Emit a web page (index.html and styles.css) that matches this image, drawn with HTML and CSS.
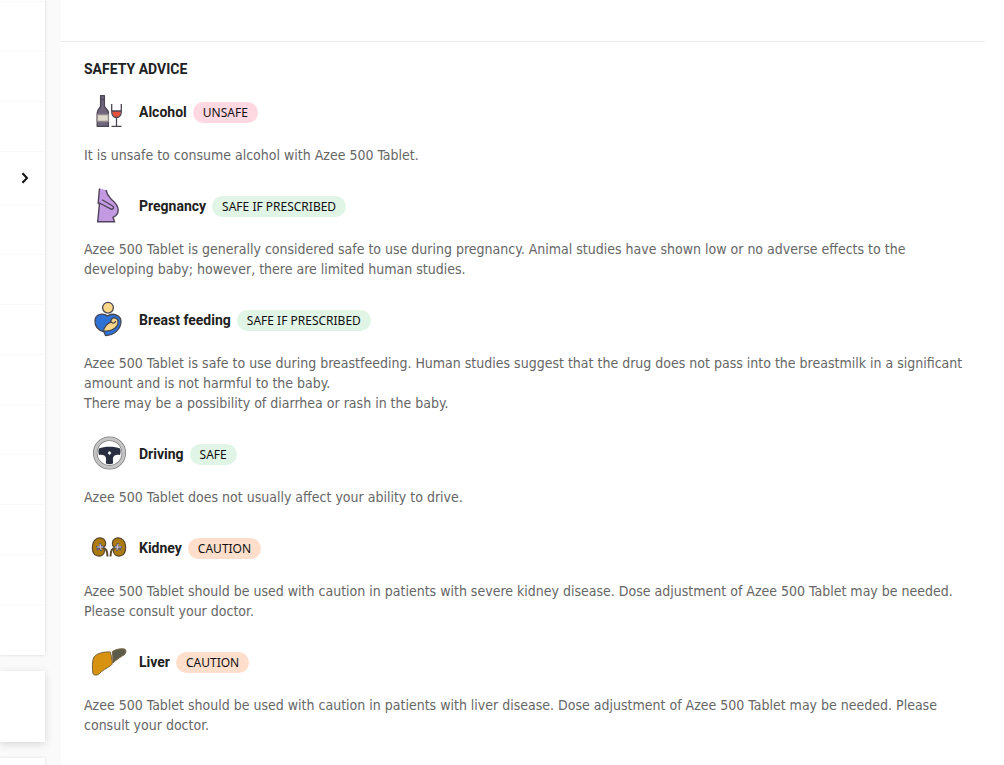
FILE: index.html
```html
<!DOCTYPE html>
<html lang="en">
<head>
<meta charset="utf-8">
<title>Safety advice</title>
<link rel="stylesheet" href="styles.css">
</head>
<body>
<div class="page">
  <aside class="side">
    <nav class="menu">
      <div class="menu-row first"></div>
      <div class="menu-row"></div>
      <div class="menu-row"></div>
      <div class="menu-row"></div>
      <div class="menu-row current">
        <button class="expand" aria-label="Expand"><svg width="8" height="12" viewBox="0 0 8 12"><path d="M1.5 1.2 6 6 1.5 10.8" fill="none" stroke="#111" stroke-width="2"/></svg></button>
      </div>
      <div class="menu-row"></div>
      <div class="menu-row"></div>
      <div class="menu-row"></div>
      <div class="menu-row"></div>
      <div class="menu-row"></div>
      <div class="menu-row"></div>
      <div class="menu-row"></div>
      <div class="menu-row"></div>
      <div class="menu-row last"></div>
    </nav>
    <div class="card"></div>
    <div class="card rest"></div>
  </aside>
  <main class="content">
    <div class="previous"></div>
    <section class="advice">
      <h2 class="title">SAFETY ADVICE</h2>

      <article class="item">
        <header class="head">
          <svg class="icon" viewBox="0 0 50 50">
            <g stroke="#4b4453" stroke-width="1.3" stroke-linejoin="round">
              <path d="M16.6 8.6h3.8v10.2c0 2.4 4 3.4 4 7.2v13.4H13.2V26c0-3.8 3.4-4.8 3.4-7.2z" fill="#70657f"/>
              <path d="M13.2 27.5h11.200v7H13.200z" fill="#ded8c9" stroke="#8f878c"/>
              <path d="M16.6 12.500h3.800" fill="none"/>
              <path d="M28 24h9c0 4-2 6.400-4.500 6.400S28 28 28 24z" fill="#e8523d" stroke="none"/>
              <path d="M27.700 17v7c0 4 2 6.500 4.800 6.500s4.800-2.500 4.800-6.500v-7M32.500 30.500v8.700M27.500 39.300h10M28 24h9" fill="none"/>
            </g>
          </svg>
          <h3 class="name">Alcohol</h3><span class="tag unsafe">UNSAFE</span>
        </header>
        <p class="text">It is unsafe to consume alcohol with Azee 500 Tablet.</p>
      </article>

      <article class="item">
        <header class="head">
          <svg class="icon" viewBox="0 0 50 50">
            <path d="M15.500 7.500 22 9c1 5 3 6.500 5.500 9.500 3 2.800 6.700 6 6.700 10.500 0 3.500-2.500 5.500-5.200 7l1.200 4.700H13.700l1.500-19-1-1z" fill="#c39ae2"/>
            <path d="M15.500 7.500 14.200 22l1.200 1.500-1.700 17.200h16.800L29 36.300c3-1.300 5.200-3.800 5.200-7.300 0-4.500-3.700-8-6.700-10.500C25 15.500 23 14 22 9" fill="none" stroke="#51435b" stroke-width="1.400"/>
            <path d="M14.500 21.500 27 28c2.300.8 3.600-2 1.700-3L18.500 19" fill="#c39ae2" stroke="#51435b" stroke-width="1.400" stroke-linecap="round"/>
          </svg>
          <h3 class="name">Pregnancy</h3><span class="tag safe">SAFE IF PRESCRIBED</span>
        </header>
        <p class="text">Azee 500 Tablet is generally considered safe to use during pregnancy. Animal studies have shown low or no adverse effects to the developing baby; however, there are limited human studies.</p>
      </article>

      <article class="item">
        <header class="head">
          <svg class="icon" viewBox="0 0 50 50">
            <g stroke="#464650" stroke-width="1.300" stroke-linejoin="round">
              <circle cx="24" cy="12.700" r="5.400" fill="#fad689"/>
              <path d="M23.500 21c-3-2.500-12-3.500-12.500 4.500-.3 5 3 9.500 9 11.500l1.500 3.500c9 0 15.500-7 15.500-14 0-7-9-9-13.500-5.500z" fill="#2f72d6"/>
              <path d="M19.500 36c1-6 4.500-7.500 7.500-9-1-4.500 6-6 7-1 .9 5.500-5.500 11-14.500 10z" fill="#fad689"/>
              <path d="M27 27c2.500 2 4.500 1 4.500-1" fill="none"/>
            </g>
          </svg>
          <h3 class="name">Breast feeding</h3><span class="tag safe">SAFE IF PRESCRIBED</span>
        </header>
        <p class="text">Azee 500 Tablet is safe to use during breastfeeding. Human studies suggest that the drug does not pass into the breastmilk in a significant amount and is not harmful to the baby.<br>There may be a possibility of diarrhea or rash in the baby.</p>
      </article>

      <article class="item">
        <header class="head">
          <svg class="icon" viewBox="0 0 50 50">
            <circle cx="25.500" cy="24" r="14.300" fill="#fff" stroke="#808080" stroke-width="4.600"/>
            <circle cx="25.500" cy="24" r="14.300" fill="none" stroke="#c4c4c4" stroke-width="3"/>
            <path d="M15 19.500c5-2.500 16-2.500 21 0 .8 2 .8 4 0 6.500-3-1-6.500 0-7 3-.3 2.200.3 4 0 5.500-2 1-5 1-7 0-.3-1.500.3-3.300 0-5.500-.5-3-4-4-7-3-.8-2.500-.8-4.500 0-6.500z" fill="#292f40"/>
            <path d="m25.500 22.100 1.900 1.900-1.900 1.900-1.900-1.900z" fill="#fff"/>
          </svg>
          <h3 class="name">Driving</h3><span class="tag safe">SAFE</span>
        </header>
        <p class="text">Azee 500 Tablet does not usually affect your ability to drive.</p>
      </article>

      <article class="item">
        <header class="head">
          <svg class="icon" viewBox="0 0 50 50">
            <g stroke="#5e4b30" stroke-width="1.300" fill="none">
              <path d="M18.500 24.500c3-.5 3.800-3.500 2.600-6.500-1.300-3-5-4-8.400-2.300C7 19 7 30 12.500 32.500c4 1.500 7.500-.5 8-4 .4-2 0-2.600-2-4z" fill="#ad7b10"/>
              <path d="M31.500 24.500c-3-.5-3.800-3.500-2.600-6.500 1.300-3 5-4 8.400-2.300C43 19 43 30 37.500 32.500c-4 1.500-7.500-.5-8-4-.4-2 0-2.600 2-4z" fill="#ad7b10"/>
              <path d="M19 25c3 .2 4.500 2.500 4.500 8.500M31 25c-3 .2-4.500 2.500-4.500 8.500" stroke-width="2"/>
              <path d="M12 24h8M16 20l1 8M13 27l5-5M38 24h-8M34 20l-1 8M37 27l-5-5" stroke="#5f5d72" stroke-width="2"/>
              <path d="M13 24h6M16 21l1 6M37 24h-6M34 21l-1 6" stroke="#d8cbd7" stroke-width="1"/>
            </g>
          </svg>
          <h3 class="name">Kidney</h3><span class="tag caution">CAUTION</span>
        </header>
        <p class="text">Azee 500 Tablet should be used with caution in patients with severe kidney disease. Dose adjustment of Azee 500 Tablet may be needed. Please consult your doctor.</p>
      </article>

      <article class="item">
        <header class="head">
          <svg class="icon" viewBox="0 0 50 50">
            <g stroke="#76643f" stroke-width="1" stroke-linejoin="round">
              <path d="M26.500 15c-7-.5-14 1.500-16.500 5-2 4-2 11-1 16.500 1 2.300 4.500 2 6.500 0 3-3.500 7-5 10.500-7.500 1.800-1 2.500-2 2.300-4z" fill="#d7930f"/>
              <path d="M28.500 14.500C32 12 37.500 11.200 41 12.200c1.500 1.500 1 4-.5 5.300-4 2.500-8 5-11.500 8.500z" fill="#5d5b4c"/>
            </g>
          </svg>
          <h3 class="name">Liver</h3><span class="tag caution">CAUTION</span>
        </header>
        <p class="text">Azee 500 Tablet should be used with caution in patients with liver disease. Dose adjustment of Azee 500 Tablet may be needed. Please consult your doctor.</p>
      </article>
    </section>
  </main>
</div>
</body>
</html>
```
FILE: styles.css
```css
* { box-sizing: border-box; }
body {
  margin: 0;
  background: #fafafa;
  color: #212121;
  font-family: "DejaVu Sans Condensed", "Noto Sans", sans-serif;
  font-size: 14px;
  line-height: 20px;
}
h2, h3, p { margin: 0; }
.page {
  display: grid;
  grid-template-columns: 45px 1fr;
  column-gap: 16px;
  height: 100vh;
  overflow: hidden;
}
.side { display: flex; flex-direction: column; gap: 16px; }
.menu {
  background: #fff;
  box-shadow: 0 0 3px rgba(0, 0, 0, 0.15);
}
.menu-row { height: 50px; border-top: 1px solid #f9f9f9; }
.menu-row.first { height: 1px; border: 0; }
.menu-row.current {
  display: flex;
  align-items: center;
  justify-content: flex-end;
  height: 53px;
  padding-right: 16px;
}
.menu-row.last { height: 51px; }
.expand { display: flex; padding: 0; border: 0; background: none; }
.card {
  flex: none;
  height: 71px;
  background: #fff;
  box-shadow: 0 2px 8px rgba(0, 0, 0, 0.15);
}
.card.rest { box-shadow: 0 0 3px rgba(0, 0, 0, 0.1); }
.content { padding-right: 19px; background: #fff; }
.previous { height: 42px; border-bottom: 1px solid #ececec; }
.advice { padding: 17px 20px 17px 23px; }
.title, .name {
  font-family: Roboto, "Noto Sans", sans-serif;
  font-size: 14px;
  line-height: 20px;
  font-weight: 700;
}
.item { padding-bottom: 8px; }
.head { display: flex; align-items: center; height: 66px; }
.icon { flex: none; width: 50px; height: 50px; margin-right: 5px; }
.name { margin-right: 6px; }
.tag {
  padding: 0 10px;
  border-radius: 11px;
  color: #111;
  font-family: "Noto Sans", sans-serif;
  font-size: 12px;
  line-height: 21px;
}
.unsafe { background: #ffd8e1; }
.safe { background: #e1f5e6; }
.caution { background: #ffdfcc; }
.text { color: #666; }
```
